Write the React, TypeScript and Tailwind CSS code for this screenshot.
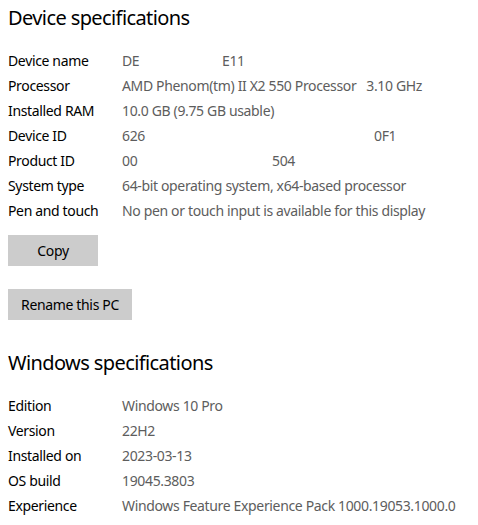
import React from "react";

const deviceSpecs: [string, React.ReactNode][] = [
  ["Device name", <span className="flex"><span className="w-[100px]">DE</span><span>E11</span></span>],
  ["Processor", "AMD Phenom(tm) II X2 550 Processor   3.10 GHz"],
  ["Installed RAM", "10.0 GB (9.75 GB usable)"],
  ["Device ID", <span className="flex"><span className="w-[252px]">626</span><span>0F1</span></span>],
  ["Product ID", <span className="flex"><span className="w-[150px]">00</span><span>504</span></span>],
  ["System type", "64-bit operating system, x64-based processor"],
  ["Pen and touch", "No pen or touch input is available for this display"],
];

const windowsSpecs: [string, string][] = [
  ["Edition", "Windows 10 Pro"],
  ["Version", "22H2"],
  ["Installed on", "2023-03-13"],
  ["OS build", "19045.3803"],
  ["Experience", "Windows Feature Experience Pack 1000.19053.1000.0"],
];

function SpecRows({ rows }: { rows: [string, React.ReactNode][] }) {
  return (
    <div className="mt-[16px] flex flex-col">
      {rows.map(([label, value]) => (
        <div key={label} className="flex h-[25px] items-center text-[14px] tracking-[-0.35px]">
          <span className="w-[114px] shrink-0 text-[#000]">{label}</span>
          <span className="whitespace-pre text-[#5d5d5d]">{value}</span>
        </div>
      ))}
    </div>
  );
}

export default function App() {
  return (
    <div
      className="h-[525px] w-[478px] overflow-hidden bg-white pl-[8px]"
      style={{ fontFamily: '"Noto Sans", "Open Sans", sans-serif' }}
    >
      <h2 className="mt-[4px] h-[28px] text-[20px] leading-[28px] tracking-[-0.6px] text-black">
        Device specifications
      </h2>
      <SpecRows rows={deviceSpecs} />

      <button className="mt-[12px] block h-[31px] w-[90px] bg-[#cccccc] text-[14px] tracking-[-0.35px] text-black">
        Copy
      </button>
      <button className="mt-[23px] block h-[31px] w-[124px] bg-[#cccccc] text-[14px] tracking-[-0.35px] text-black">
        Rename this PC
      </button>

      <h2 className="mt-[29px] h-[28px] text-[20px] leading-[28px] tracking-[-0.6px] text-black">
        Windows specifications
      </h2>
      <SpecRows rows={windowsSpecs} />
    </div>
  );
}
